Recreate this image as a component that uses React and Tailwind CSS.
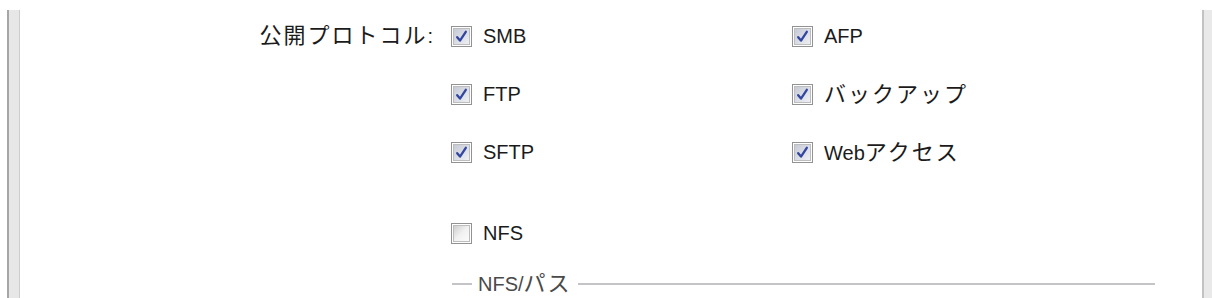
import React from 'react'

// 公開プロトコル設定パネル（チェックボックスの2列グリッド）
function Box({ checked }) {
  return (
    <span className="inline-flex w-[21px] h-[21px] shrink-0 border border-[#929292] bg-white p-px">
      <span
        className={
          'flex-1 flex items-center justify-center border border-[#bdbdbd] ' +
          (checked
            ? 'bg-gradient-to-br from-[#c6cad6] to-[#eef0f4]'
            : 'bg-gradient-to-br from-[#cfcfcf] via-[#f1f1f1] to-[#fbfbfb]')
        }
      >
        {checked && (
          <svg width="13" height="13" viewBox="0 0 13 13">
            <path d="M2.2 7.2 L5 10.6 L10.8 1.8" fill="none" stroke="#3246a0" strokeWidth="2.3" strokeLinejoin="round" strokeLinecap="round" />
          </svg>
        )}
      </span>
    </span>
  )
}

function Item({ checked = true, children }) {
  return (
    <label className="flex items-center gap-[11px]">
      <Box checked={checked} />
      <span className="whitespace-nowrap">{children}</span>
    </label>
  )
}

const J = ({ children }) => <span className="text-[22px] tracking-[2px]">{children}</span>

export default function App() {
  return (
    <div
      className="flex h-[298px] w-[1212px] bg-white text-[20px] text-[#1b1b1b] overflow-hidden pl-[7px]"
      style={{ fontFamily: '"Liberation Sans", "Noto Sans CJK JP", sans-serif' }}
    >
      <div className="mt-[10px] w-[13px] border-l-2 border-r border-l-[#a6a6a6] border-r-[#cdcdcd] bg-[#e7e7e7]" />

      <div className="flex-1 flex flex-col pt-[7px]">
        <div className="flex h-[58px] items-center">
          <div className="w-[413px] text-right leading-none whitespace-nowrap">
            <J>公開プロトコル</J>:
          </div>
          <div className="ml-[18px] w-[341px]"><Item>SMB</Item></div>
          <Item>AFP</Item>
        </div>
        <div className="flex h-[58px] items-center">
          <div className="ml-[431px] w-[341px]"><Item>FTP</Item></div>
          <Item><J>バックアップ</J></Item>
        </div>
        <div className="flex h-[58px] items-center">
          <div className="ml-[431px] w-[341px]"><Item>SFTP</Item></div>
          <Item>Web<J>アクセス</J></Item>
        </div>
        <div className="flex h-[58px] items-center mt-[23px]">
          <div className="ml-[431px]"><Item checked={false}>NFS</Item></div>
        </div>
        <div className="ml-[432px] mr-[47px] mt-[11px] flex items-center gap-[6px] text-[#4a4a4a]">
          <span className="w-[20px] h-[2px] bg-[#c4c4c8]" />
          <span className="leading-none whitespace-nowrap">NFS/<J>パス</J></span>
          <span className="flex-1 h-[2px] bg-[#c4c4c8]" />
        </div>
      </div>

      <div className="mt-[10px] w-[10px] border-l-2 border-l-[#c2c2c2] bg-[#e9e9e9]" />
    </div>
  )
}
